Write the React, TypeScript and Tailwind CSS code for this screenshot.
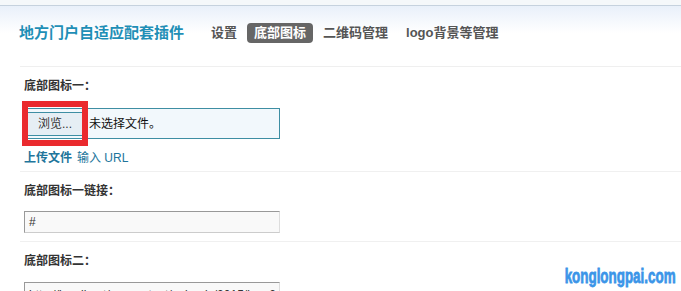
export default function App() {
  return (
    <div className="relative w-[681px] h-[291px] overflow-hidden bg-white font-['Liberation_Sans','Noto_Sans_CJK_SC',sans-serif] text-[#333]">
      <div className="h-[6px] bg-[#f5f8fa] border-b border-[#c6d2de]" />
      <div className="bg-linear-to-b from-[#e9f0fa] to-white to-[45%] pl-[19px] pt-[17px] pb-[23px]">
        <div className="flex items-center h-[20px]">
          <div className="text-[15px] leading-[20px] font-bold text-[#1f8fb6]">地方门户自适应配套插件</div>
          <div className="ml-[27px] text-[13px] leading-[20px] font-bold text-[#555]">设置</div>
          <div className="ml-[10px] h-[20px] px-[7px] rounded-[4px] bg-[#666] text-[13px] leading-[20px] font-bold text-white">底部图标</div>
          <div className="ml-[10px] text-[13px] leading-[20px] font-bold text-[#555]">二维码管理</div>
          <div className="ml-[18px] text-[13px] leading-[20px] font-bold text-[#555]">logo背景等管理</div>
        </div>
      </div>
      <div className="ml-[20px] border-t border-[#efefef]">
        <div className="pl-[4px] pt-[12px] pb-[6px] border-b border-[#f0f0f0]">
          <div className="text-[12px] leading-[14px] font-bold">底部图标一：</div>
          <div className="relative mt-[15px] w-[256px] h-[31px] border border-[#3e8ea3] bg-[#f2f8fc] flex items-center">
            <div className="ml-[3px] w-[54px] h-[24px] border-y border-[#3e8ea3] bg-[#e6eef4] flex items-center justify-center text-[12px] leading-[14px] text-[#333]">浏览...</div>
            <div className="ml-[7px] text-[12px] leading-[14px] text-[#111]">未选择文件。</div>
            <div className="absolute left-[-3px] top-[-8px] w-[66px] h-[45px] border-[6px] border-[#ea2a2e]" />
          </div>
          <div className="mt-[12px] flex items-center h-[14px] text-[12px] leading-[14px] text-[#21759b]">
            <span className="font-bold">上传文件</span>
            <span className="ml-[5px]">输入 URL</span>
          </div>
        </div>
        <div className="pl-[4px] pt-[12px] pb-[8px] border-b border-[#f0f0f0]">
          <div className="text-[12px] leading-[14px] font-bold">底部图标一链接：</div>
          <div className="mt-[13px] w-[256px] h-[22px] border border-t-[#999] border-l-[#999] border-r-[#ddd] border-b-[#ccc] bg-[#f9f9f9] pl-[4px] text-[12px] leading-[20px] text-[#333]">#</div>
        </div>
        <div className="pl-[4px] pt-[12px]">
          <div className="text-[12px] leading-[14px] font-bold">底部图标二：</div>
          <div className="mt-[14px] w-[256px] h-[22px] border border-t-[#999] border-l-[#999] border-r-[#ddd] border-b-[#ccc] bg-[#f9f9f9] pl-[4px] text-[12px] leading-[14px] pt-[5px] text-[#333] overflow-hidden whitespace-nowrap">http://localhost/wp-content/uploads/2015/icon2.png</div>
        </div>
      </div>
      <div className="absolute right-[5px] top-[264px] text-[20px] leading-[24px] font-bold text-[#3b95e8] origin-right [transform:scaleX(0.67)] [-webkit-text-stroke:0.8px_#3b95e8]">konglongpai.com</div>
    </div>
  );
}
